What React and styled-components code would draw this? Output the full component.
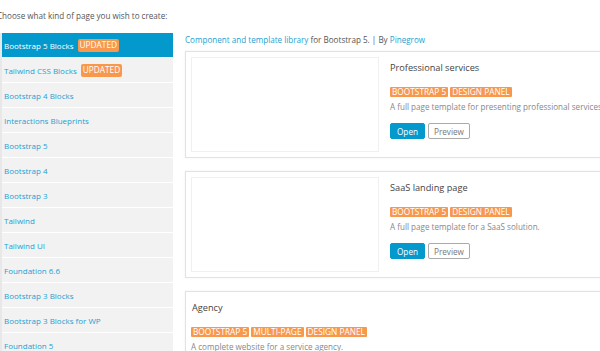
import React from "react";
import styled, { createGlobalStyle } from "styled-components";

const GlobalStyle = createGlobalStyle`
  html, body { margin: 0; padding: 0; background: #fff; }
  body {
    font-family: "Open Sans", "Liberation Sans", sans-serif;
    width: 600px;
    height: 351px;
    overflow: hidden;
  }
`;

const Page = styled.div`
  width: 600px;
  height: 351px;
  overflow: hidden;
`;

const Intro = styled.div`
  height: 33px;
  display: flex;
  align-items: center;
  margin-left: -3px;
  font-size: 8.1px;
  color: #555;
  padding-bottom: 2px;
  box-sizing: border-box;
`;

const Main = styled.div`
  display: flex;
  gap: 12px;
  align-items: flex-start;
`;

const Sidebar = styled.ul`
  list-style: none;
  margin: 0;
  padding: 0;
  width: 171px;
  flex: none;
  border-left: 2px solid #e8e8e8;
  display: flex;
  flex-direction: column;
  gap: 1px;
`;

const NavItem = styled.li`
  height: 24px;
  display: flex;
  align-items: center;
  gap: 4px;
  padding-left: 2px;
  font-size: 8px;
  background: ${(p) => (p.$active ? "#0399cd" : "#f2f2f2")};
  color: ${(p) => (p.$active ? "#fff" : "#249fd3")};
`;

const Badge = styled.span`
  display: inline-flex;
  align-items: center;
  background: #f8984d;
  color: #fff;
  font-size: 8.3px;
  line-height: 1;
  text-transform: uppercase;
  height: ${(p) => (p.$tall ? "13px" : "10px")};
  padding: 0 2px;
  border-radius: ${(p) => (p.$tall ? "2px" : "1px")};
  box-sizing: border-box;
`;

const Content = styled.div`
  width: 440px;
  flex: none;
  display: flex;
  flex-direction: column;
`;

const Lead = styled.div`
  height: 12px;
  margin-bottom: 6px;
  display: flex;
  align-items: center;
  font-size: 8.1px;
  color: #555;
  white-space: pre;
`;

const Link = styled.span`
  color: #249fd3;
`;

const Cards = styled.div`
  display: flex;
  flex-direction: column;
  gap: 13px;
`;

const Card = styled.div`
  display: flex;
  gap: 11px;
  padding: 5px;
  border: 1px solid #e2e2e2;
  box-shadow: 0 0 2px rgba(0, 0, 0, 0.06);
  background: #fff;
`;

const Thumb = styled.div`
  width: 186px;
  height: 93px;
  flex: none;
  border: 1px solid #f0f0f0;
  background: #fff;
`;

const Info = styled.div`
  display: flex;
  flex-direction: column;
  white-space: nowrap;
`;

const Title = styled.div`
  font-size: 9.2px;
  color: #444;
  height: 20px;
  display: flex;
  align-items: center;
  padding-left: ${(p) => (p.$plain ? "1px" : "0")};
`;

const Tags = styled.div`
  display: flex;
  gap: 2px;
  margin-top: 10px;
`;

const Desc = styled.div`
  font-size: 8.1px;
  color: #888;
  height: 14px;
  display: flex;
  align-items: center;
  margin-top: 2px;
`;

const Actions = styled.div`
  display: flex;
  gap: 3px;
  margin-top: 10px;
`;

const Button = styled.button`
  height: 16px;
  box-sizing: border-box;
  font-family: inherit;
  font-size: 8.2px;
  padding: 0 ${(p) => (p.$primary ? "6px" : "5px")};
  border-radius: 2px;
  border: 1px solid ${(p) => (p.$primary ? "#0399cd" : "#aaa")};
  background: ${(p) => (p.$primary ? "#0399cd" : "#fff")};
  color: ${(p) => (p.$primary ? "#fff" : "#777")};
  cursor: pointer;
`;

const navItems = [
  { label: "Bootstrap 5 Blocks", badge: "Updated", active: true },
  { label: "Tailwind CSS Blocks", badge: "Updated" },
  { label: "Bootstrap 4 Blocks" },
  { label: "Interactions Blueprints" },
  { label: "Bootstrap 5" },
  { label: "Bootstrap 4" },
  { label: "Bootstrap 3" },
  { label: "Tailwind" },
  { label: "Tailwind UI" },
  { label: "Foundation 6.6" },
  { label: "Bootstrap 3 Blocks" },
  { label: "Bootstrap 3 Blocks for WP" },
  { label: "Foundation 5" },
];

const templates = [
  {
    title: "Professional services",
    tags: ["Bootstrap 5", "Design Panel"],
    desc: "A full page template for presenting professional services.",
    thumb: true,
  },
  {
    title: "SaaS landing page",
    tags: ["Bootstrap 5", "Design Panel"],
    desc: "A full page template for a SaaS solution.",
    thumb: true,
  },
  {
    title: "Agency",
    tags: ["Bootstrap 5", "Multi-page", "Design Panel"],
    desc: "A complete website for a service agency.",
    thumb: false,
  },
];

export default function App() {
  return (
    <Page>
      <GlobalStyle />
      <Intro>Choose what kind of page you wish to create:</Intro>
      <Main>
        <Sidebar>
          {navItems.map((n) => (
            <NavItem key={n.label} $active={n.active}>
              {n.label}
              {n.badge && <Badge $tall>{n.badge}</Badge>}
            </NavItem>
          ))}
        </Sidebar>
        <Content>
          <Lead>
            <Link>Component and template library</Link>
            {" for Bootstrap 5. | By "}
            <Link>Pinegrow</Link>
          </Lead>
          <Cards>
            {templates.map((t) => (
              <Card key={t.title}>
                {t.thumb && <Thumb />}
                <Info>
                  <Title $plain={!t.thumb}>{t.title}</Title>
                  <Tags>
                    {t.tags.map((tag) => (
                      <Badge key={tag}>{tag}</Badge>
                    ))}
                  </Tags>
                  <Desc>{t.desc}</Desc>
                  {t.thumb && (
                    <Actions>
                      <Button $primary>Open</Button>
                      <Button>Preview</Button>
                    </Actions>
                  )}
                </Info>
              </Card>
            ))}
          </Cards>
        </Content>
      </Main>
    </Page>
  );
}
